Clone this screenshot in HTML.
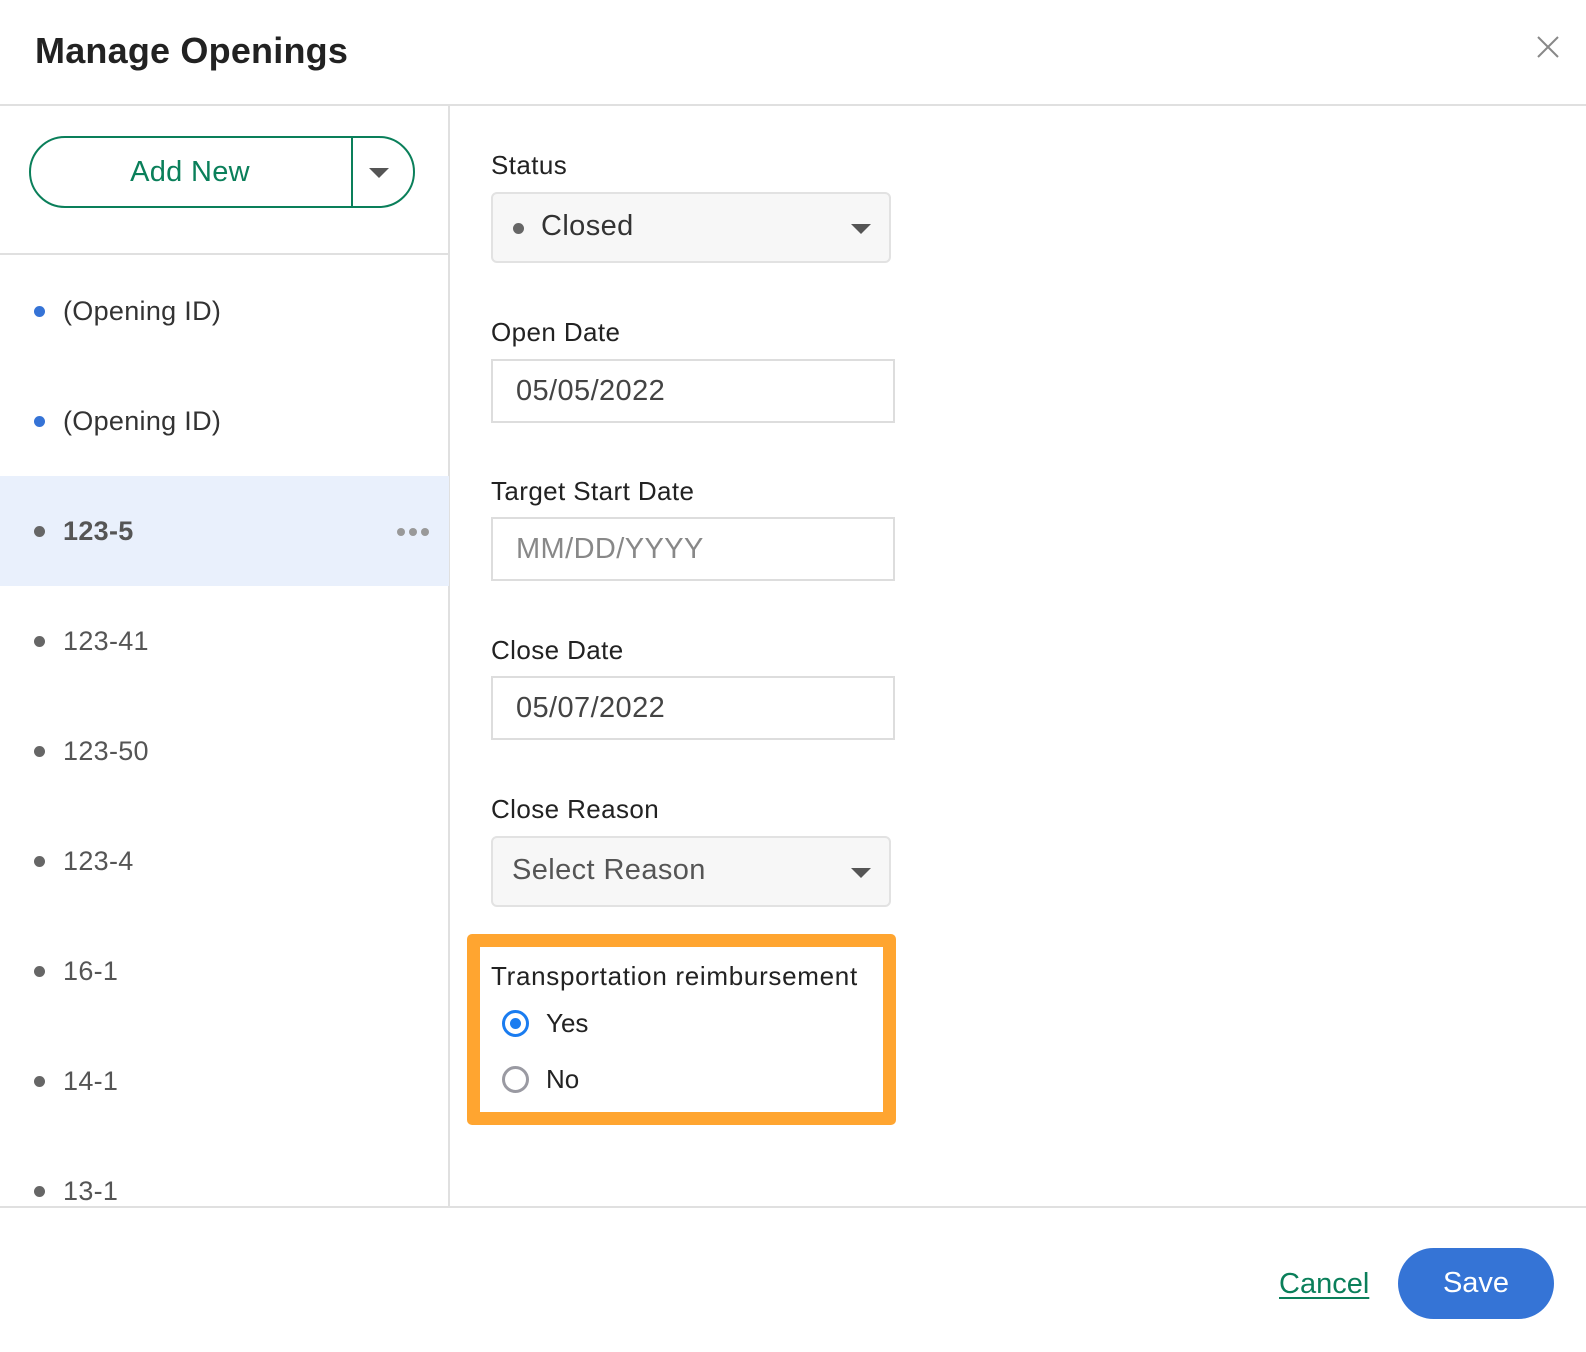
<!DOCTYPE html>
<html><head><meta charset="utf-8"><style>
*{box-sizing:border-box;margin:0;padding:0}
body{width:1586px;height:1352px;background:#fff;font-family:"Liberation Sans",sans-serif;color:#222;position:relative;overflow:hidden}
.a{position:absolute}
.lbl{position:absolute;left:491px;font-size:26px;color:#222;line-height:30px;letter-spacing:0.4px}
.inp{position:absolute;left:491px;width:404px;height:64px;border:2px solid #ddd;font-size:29px;color:#444;padding-left:23px;line-height:60px;letter-spacing:0.4px}
.sel{position:absolute;left:491px;width:400px;height:71px;border:2px solid #e2e2e2;border-radius:6px;background:#f7f7f7;font-size:29px;color:#333;line-height:65px;letter-spacing:0.4px}
.tri{position:absolute;width:0;height:0;border-left:10px solid transparent;border-right:10px solid transparent;border-top:10px solid #555}
.item{position:absolute;left:0;width:449px;height:110px;font-size:27px;color:#555;letter-spacing:0.3px}
.item .d{position:absolute;left:34px;top:50px;width:11px;height:11px;border-radius:50%;background:#666}
.item span{position:absolute;left:63px;top:39px;line-height:32px}
</style></head><body>
<div class="a" style="left:35px;top:30px;font-size:36px;font-weight:bold;color:#222;letter-spacing:0.2px">Manage Openings</div>
<svg class="a" style="left:1536px;top:35px" width="24" height="24" viewBox="0 0 24 24"><path d="M2 2L22 22M22 2L2 22" stroke="#888" stroke-width="2"/></svg>
<div class="a" style="left:0;top:104px;width:1586px;height:2px;background:#e0e0e0"></div>
<div class="a" style="left:448px;top:106px;width:2px;height:1101px;background:#e0e0e0"></div>
<div class="a" style="left:29px;top:136px;width:386px;height:72px;border:2px solid #0a7f5a;border-radius:36px"></div>
<div class="a" style="left:351px;top:136px;width:2px;height:72px;background:#0a7f5a"></div>
<div class="a" style="left:29px;top:156px;width:322px;text-align:center;font-size:29px;color:#0a7f5a;letter-spacing:0.3px">Add New</div>
<div class="tri" style="left:369px;top:168px"></div>
<div class="a" style="left:0;top:253px;width:449px;height:2px;background:#e0e0e0"></div>
<div class="item" style="top:256px"><div class="d" style="background:#3573d6"></div><span style="color:#333">(Opening ID)</span></div>
<div class="item" style="top:366px"><div class="d" style="background:#3573d6"></div><span style="color:#333">(Opening ID)</span></div>
<div class="item" style="top:476px;background:#e9f0fc"><div class="d"></div><span style="font-weight:bold;color:#555">123-5</span>
<div class="a" style="left:397px;top:52px;width:8px;height:8px;border-radius:50%;background:#999"></div><div class="a" style="left:409px;top:52px;width:8px;height:8px;border-radius:50%;background:#999"></div><div class="a" style="left:421px;top:52px;width:8px;height:8px;border-radius:50%;background:#999"></div></div>
<div class="item" style="top:586px"><div class="d"></div><span>123-41</span></div>
<div class="item" style="top:696px"><div class="d"></div><span>123-50</span></div>
<div class="item" style="top:806px"><div class="d"></div><span>123-4</span></div>
<div class="item" style="top:916px"><div class="d"></div><span>16-1</span></div>
<div class="item" style="top:1026px"><div class="d"></div><span>14-1</span></div>
<div class="item" style="top:1136px;height:70px;overflow:hidden"><div class="d"></div><span>13-1</span></div>

<div class="lbl" style="top:150px">Status</div>
<div class="sel" style="top:192px"><div class="a" style="left:20px;top:29px;width:11px;height:11px;border-radius:50%;background:#666"></div><span class="a" style="left:48px;top:0">Closed</span><div class="tri" style="left:358px;top:30px"></div></div>
<div class="lbl" style="top:317px">Open Date</div>
<div class="inp" style="top:359px">05/05/2022</div>
<div class="lbl" style="top:476px">Target Start Date</div>
<div class="inp" style="top:517px;color:#888">MM/DD/YYYY</div>
<div class="lbl" style="top:635px">Close Date</div>
<div class="inp" style="top:676px">05/07/2022</div>
<div class="lbl" style="top:794px">Close Reason</div>
<div class="sel" style="top:836px"><span class="a" style="left:19px;top:0;color:#555">Select Reason</span><div class="tri" style="left:358px;top:30px"></div></div>

<div class="a" style="left:467px;top:934px;width:429px;height:191px;border:13px solid #ffa530;border-radius:5px"></div>
<div class="lbl" style="top:961px;letter-spacing:0.7px">Transportation reimbursement</div>
<div class="a" style="left:502px;top:1010px;width:27px;height:27px;border-radius:50%;border:3px solid #1a7cf0"><div class="a" style="left:5px;top:5px;width:11px;height:11px;border-radius:50%;background:#1a7cf0"></div></div>
<div class="a" style="left:546px;top:1008px;font-size:26px;line-height:30px">Yes</div>
<div class="a" style="left:502px;top:1066px;width:27px;height:27px;border-radius:50%;border:3px solid #9a9aa2"></div>
<div class="a" style="left:546px;top:1064px;font-size:26px;line-height:30px">No</div>

<div class="a" style="left:0;top:1206px;width:1586px;height:2px;background:#e0e0e0"></div>
<div class="a" style="left:1279px;top:1268px;font-size:29px;color:#0a7f5a;text-decoration:underline;text-underline-offset:4px">Cancel</div>
<div class="a" style="left:1398px;top:1248px;width:156px;height:71px;border-radius:36px;background:#3574d6;color:#fff;font-size:29px;text-align:center;line-height:71px">Save</div>
</body></html>
